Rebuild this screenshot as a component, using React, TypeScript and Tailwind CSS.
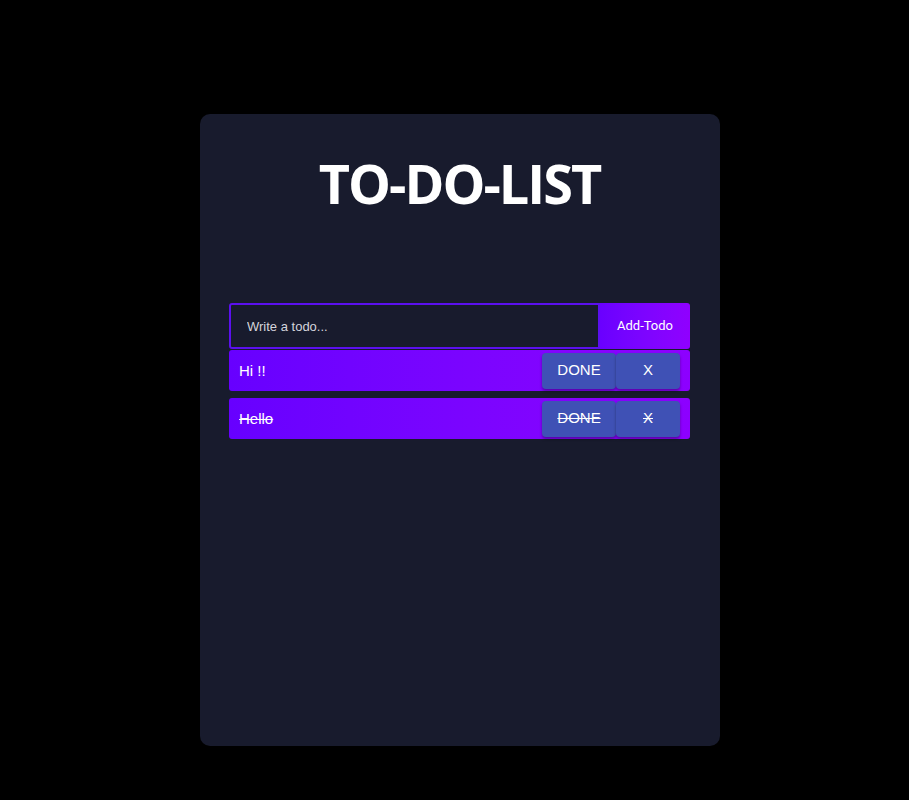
import React from 'react';

const todos = [
  { id: 1, text: 'Hi !!', done: false },
  { id: 2, text: 'Hello', done: true },
];

export default function App() {
  return (
    <div className="flex min-h-[800px] w-full bg-black pt-[114px] pl-[200px] font-['Liberation_Sans',Arial,sans-serif]">
      <div className="flex h-[632px] w-[520px] flex-col items-center rounded-[10px] bg-[#181b2d] pr-[30px] pl-[29px]">
        <h1 className="mt-[37px] font-['Open_Sans',sans-serif] text-[54px] leading-[64px] font-bold tracking-[-2px] text-white">
          TO-DO-LIST
        </h1>

        <form className="mt-[88px] flex h-[46px] w-full" onSubmit={(e) => e.preventDefault()}>
          <input
            type="text"
            placeholder="Write a todo..."
            className="h-full flex-1 rounded-l-[3px] border-2 border-[#5b10ee] bg-[#181b2d] px-4 text-[13px] text-white outline-none placeholder:text-[#d4d4dc]"
          />
          <button
            type="submit"
            className="h-full w-[90px] rounded-r-[3px] bg-gradient-to-r from-[#6a00ff] to-[#9000ff] font-['Roboto',sans-serif] text-[13px] text-white"
          >
            Add-Todo
          </button>
        </form>

        <div className="mt-px flex w-full flex-col gap-[7px]">
          {todos.map((todo) => (
            <div
              key={todo.id}
              className={`flex h-[41px] items-center rounded-[3px] bg-gradient-to-r from-[#6700ff] to-[#8d00ff] pr-[10px] pl-[10px] text-white ${todo.done ? 'line-through' : ''}`}
            >
              <span className="flex-1 pt-[2px] text-[15px]">{todo.text}</span>
              <button className="h-[36px] w-[74px] rounded-[4px] bg-[#3f51b5] text-[15px] text-white shadow-[0_2px_3px_rgba(0,0,0,0.35)]">
                DONE
              </button>
              <button className="h-[36px] w-[64px] rounded-[4px] bg-[#3f51b5] text-[15px] text-white shadow-[0_2px_3px_rgba(0,0,0,0.35)]">
                X
              </button>
            </div>
          ))}
        </div>
      </div>
    </div>
  );
}
